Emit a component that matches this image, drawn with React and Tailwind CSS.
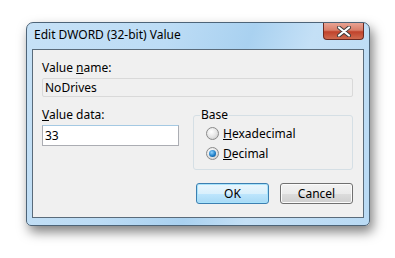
import React from 'react';

const font = { fontFamily: '"Segoe UI", "Noto Sans", "Liberation Sans", sans-serif' };

const CloseButton = () => (
  <div className="w-[41px] h-[17px] rounded-b-[4px] border border-[#6b2a22] border-t-0 bg-[linear-gradient(#e8a393_0%,#d97e69_45%,#c0432c_55%,#cf6a4f_100%)] flex items-center justify-center">
    <svg width="16" height="11" viewBox="0 0 16 11">
      <path d="M3 1.5 L8 5.5 L13 1.5 M3 9.5 L8 5.5 L13 9.5" stroke="#3a3a3a" strokeWidth="4" strokeLinecap="round" fill="none" />
      <path d="M3 1.5 L8 5.5 L13 1.5 M3 9.5 L8 5.5 L13 9.5" stroke="#ffffff" strokeWidth="2.2" strokeLinecap="round" fill="none" />
    </svg>
  </div>
);

const Radio = ({ checked }) => (
  <div className="w-[13px] h-[13px] rounded-full border border-[#8a8a8a] bg-[radial-gradient(circle_at_40%_35%,#ffffff_0%,#e6e6e6_50%,#c4c4c4_100%)] flex items-center justify-center">
    {checked && (
      <div className="w-[7px] h-[7px] rounded-full bg-[radial-gradient(circle_at_40%_35%,#8fd3ff_0%,#1f7fc8_55%,#0a3f74_100%)]" />
    )}
  </div>
);

const Button = ({ children, primary }) => (
  <div
    className={
      primary
        ? 'w-[73px] h-[21px] rounded-[3px] border border-[#3c7fb1] shadow-[inset_0_0_0_1px_#a8e3fb] bg-[linear-gradient(#eaf6fd_0%,#d9f0fc_50%,#bee6fd_51%,#a7d9f5_100%)] flex items-center justify-center text-black'
        : 'w-[73px] h-[21px] rounded-[3px] border border-[#707070] shadow-[inset_0_0_0_1px_#fbfbfb] bg-[linear-gradient(#f2f2f2_0%,#ebebeb_50%,#dddddd_51%,#cfcfcf_100%)] flex items-center justify-center text-black'
    }
  >
    {children}
  </div>
);

export default function App() {
  return (
    <div className="w-[395px] h-[258px] bg-white pl-[26px] pt-[22px] text-[12px] text-black" style={font}>
      <div className="w-[344px] h-[204px] rounded-t-[7px] rounded-b-[5px] border border-[#4d6478] bg-[linear-gradient(110deg,#c6e1f6_0%,#bcdcf5_35%,#a9d1f0_55%,#c4e0f6_70%,#b9daf4_100%)] shadow-[3px_6px_12px_rgba(0,0,0,0.5)] flex flex-col px-[5px] pb-[7px]">
        {/* Title bar */}
        <div className="h-[26px] flex items-start justify-between">
          <div className="pl-[2px] pt-[4px] text-[12px] leading-[16px]">Edit DWORD (32-bit) Value</div>
          <CloseButton />
        </div>

        {/* Client area */}
        <div className="flex-1 border border-[#5a6b7a] bg-[#f0f0f0] pl-[9px] pr-[10px] pt-[10px] flex flex-col">
          <div className="leading-[15px]">
            Value <span className="underline">n</span>ame:
          </div>
          <div className="mt-[3px] h-[19px] border border-[#d9d9d9] rounded-[2px] pl-[2px] leading-[17px]">NoDrives</div>

          <div className="flex mt-[10px]">
            <div className="w-[137px] flex flex-col">
              <div className="leading-[15px]">
                <span className="underline">V</span>alue data:
              </div>
              <div className="mt-[3px] h-[21px] border border-[#abadb3] border-t-[#a4c9e3] bg-white pl-[2px] leading-[19px]">33</div>
            </div>

            <div className="flex-1 ml-[14px] relative mt-[8px]">
              <div className="absolute left-[7px] -top-[7px] px-[1px] bg-[#f0f0f0] leading-[14px]">Base</div>
              <div className="h-[55px] border border-[#d5dfe5] rounded-[3px] pl-[12px] pt-[11px] flex flex-col gap-[7px]">
                <div className="flex items-center gap-[4px] leading-[13px]">
                  <Radio />
                  <span><span className="underline">H</span>exadecimal</span>
                </div>
                <div className="flex items-center gap-[4px] leading-[13px]">
                  <Radio checked />
                  <span><span className="underline">D</span>ecimal</span>
                </div>
              </div>
            </div>
          </div>

          <div className="flex justify-end gap-[11px] mt-[13px]">
            <Button primary>OK</Button>
            <Button>Cancel</Button>
          </div>
        </div>
      </div>
    </div>
  );
}
